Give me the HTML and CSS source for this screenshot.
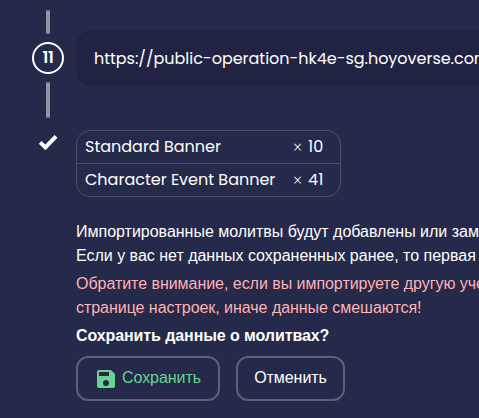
FILE: index.html
```html
<!DOCTYPE html>
<html lang="ru">
<head>
<meta charset="utf-8">
<title>Импорт молитв</title>
<link rel="stylesheet" href="styles.css">
</head>
<body>
<main class="page">
  <aside class="steps">
    <i class="line line-top"></i>
    <b class="number">11</b>
    <i class="line line-bottom"></i>
    <svg class="check" viewBox="0 0 20 16"><path d="M2.2 8.4 7.4 13.4 18 2.4" fill="none" stroke="#fff" stroke-width="4"/></svg>
  </aside>
  <section class="content">
    <div class="url"><span class="url-text">https://public-operation-hk4e-sg.hoyoverse.com</span></div>
    <div class="summary">
      <div class="row"><span class="name">Standard Banner</span><span class="times">×</span><span class="count">10</span></div>
      <div class="row"><span class="name">Character Event Banner</span><span class="times">×</span><span class="count">41</span></div>
    </div>
    <p>Импортированные молитвы будут добавлены или заменены<br>Если у вас нет данных сохраненных ранее, то первая молитва</p>
    <p class="warning">Обратите внимание, если вы импортируете другую учетную<br>странице настроек, иначе данные смешаются!</p>
    <p class="question">Сохранить данные о молитвах?</p>
    <div class="actions">
      <button class="save"><svg class="disk" viewBox="3 3 18 18"><path fill="currentColor" d="M15 9H5V5h10m-3 14a3 3 0 0 1-3-3 3 3 0 0 1 3-3 3 3 0 0 1 3 3 3 3 0 0 1-3 3m5-16H5c-1.110 0-2 .9-2 2v14a2 2 0 0 0 2 2h14a2 2 0 0 0 2-2V7z"/></svg><span>Сохранить</span></button>
      <button>Отменить</button>
    </div>
  </section>
</main>
</body>
</html>
```
FILE: styles.css
```css
* { box-sizing: border-box; }
body {
  margin: 0;
  overflow: hidden;
  background: #25294a;
  color: #fff;
  font: 16px/24px "Liberation Sans", Arial, sans-serif;
}
.page { display: flex; height: 418px; overflow: hidden; }
.steps {
  width: 76px;
  flex: none;
  display: flex;
  flex-direction: column;
  align-items: center;
  padding: 10px 8px 0 28px;
}
.line { width: 4px; border-radius: 2px; background: #9294a5; }
.line-top { height: 24px; }
.line-bottom { height: 36px; }
.number {
  width: 32px;
  height: 32px;
  margin: 8px 0;
  border: 2px solid #fff;
  border-radius: 50%;
  font: 600 16px/28px Poppins, Inter, sans-serif;
  letter-spacing: -.2px;
  text-align: center;
}
.check { width: 20px; height: 16px; margin-top: 16px; }
.content { flex: 1; min-width: 0; padding-top: 30px; white-space: nowrap; overflow: hidden; }
.url {
  height: 56px;
  padding: 0 18px;
  border-radius: 16px 0 0 16px;
  background: #202442;
  overflow: hidden;
  font: 16px/57px Poppins, Inter, sans-serif;
}
.url-text { letter-spacing: -.02px; }
.summary {
  width: 265px;
  height: 67px;
  margin: 44px 0 23px;
  border: 1px solid #4a5163;
  border-radius: 14px;
  font: 16px/32px Poppins, Inter, sans-serif;
}
.row { display: flex; height: 32px; padding-left: 8px; }
.row + .row { height: 33px; border-top: 1px solid #4a5163; }
.name { width: 208px; }
.times { width: 15px; font-family: "Noto Sans", sans-serif; font-size: 16px; font-weight: 300; }
.count { letter-spacing: .2px; }
p { margin: 0 0 4px; letter-spacing: -.01px; }
.warning { color: #feb2b2; letter-spacing: -.04px; }
.question { font-weight: 700; margin-bottom: 8px; letter-spacing: -.09px; }
.actions { display: flex; gap: 16px; }
button {
  display: flex;
  align-items: center;
  justify-content: center;
  width: 109px;
  height: 45px;
  padding: 0 0 2px;
  border: 2px solid #5c5f77;
  border-radius: 12px;
  background: transparent;
  color: #fff;
  font: inherit;
  letter-spacing: -.05px;
}
.save { width: 144px; gap: 7px; padding-left: 2px; color: #68d391; }
.disk { width: 18px; height: 18px; margin-top: 2px; }
```
